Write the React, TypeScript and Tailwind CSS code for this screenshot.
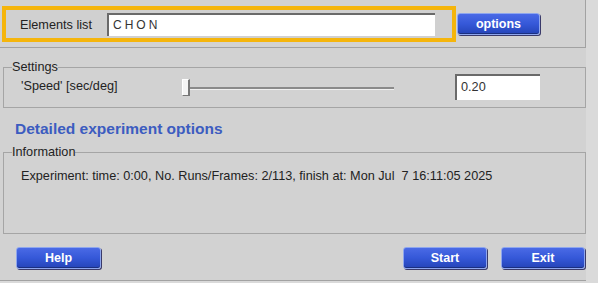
import React from "react";

const font = { fontFamily: '"Liberation Sans", Arial, sans-serif' };

function BlueButton({ label, className }: { label: string; className: string }) {
  return (
    <button
      className={
        "h-[22px] rounded-[3px] border border-[#8ea6ee] bg-gradient-to-b from-[#4a6ae6] via-[#3558d8] to-[#2544b8] text-white text-[12.5px] font-bold font-['Liberation_Sans',Arial,sans-serif] shadow-[inset_0_-1px_0_#1a2f80,1px_1px_0_#3a3a6a] " +
        className
      }
    >
      {label}
    </button>
  );
}

export default function App() {
  return (
    <div
      className="w-[598px] h-[283px] bg-[#dadada] text-[#222] text-[12.7px] flex flex-col overflow-hidden"
      style={font}
    >
      {/* Top panel */}
      <div className="w-[586px] h-[48px] shrink-0 bg-[#d2d2d2] border-b border-r border-[#a2a2a2] flex pt-[6px] pl-[2px]">
        <div className="w-[454px] h-[36px] border-4 border-[#f5b50c] bg-[#d0d0d0] flex items-center">
          <span className="ml-[14px] mt-[3px] w-[87px] text-[12.7px] text-[#222]">Elements list</span>
          <div className="w-[328px] h-[23px] bg-white border-t-2 border-l-2 border-[#6a6a6a] flex items-center pl-[4px] text-[12px] tracking-[3px] text-[#333]">
            CHON
          </div>
        </div>
        <BlueButton label="options" className="ml-[1px] mt-[7px] w-[83px]" />
      </div>

      <div className="w-[586px] h-[233px] shrink-0 bg-[#d2d2d2] flex flex-col pl-[3px] border-b border-[#a2a2a2]">
        {/* Settings */}
        <fieldset className="mt-[12px] h-[48px] border border-[#a5a5a5] pl-[6px] flex items-center">
          <legend className="px-0 text-[12.7px] leading-[14px] text-[#222] ml-[2px]">Settings</legend>
          <div className="flex items-center w-full h-full pb-[6px]">
            <span className="ml-[11px] w-[161px] text-[12.7px]">'Speed' [sec/deg]</span>
            <div className="relative w-[214px] h-[18px] flex items-center">
              <div className="w-[8px] h-[17px] bg-[#f4f4f4] border-r-2 border-b border-[#777] border-l border-t border-l-white border-t-white shrink-0" />
              <div className="w-[204px] h-[3px] bg-[#f0f0f0] border-t-2 border-[#8a8a8a] mt-[2px]" />
            </div>
            <div className="ml-[59px] w-[85px] h-[26px] bg-white border-t-2 border-l-2 border-[#6a6a6a] flex items-center pl-[4px] text-[12.7px] text-[#333]">
              0.20
            </div>
          </div>
        </fieldset>

        <div className="mt-[11px] ml-[12px] h-[19px] text-[15.5px] font-bold text-[#3c5cc0] leading-[19px]">
          Detailed experiment options
        </div>

        {/* Information */}
        <fieldset className="mt-[7px] h-[89px] border border-[#a5a5a5] pl-[6px]">
          <legend className="px-0 text-[12.7px] leading-[14px] text-[#222] ml-[2px]">Information</legend>
          <div className="ml-[11px] mt-[8px] text-[12.7px] text-[#222] whitespace-pre">
            Experiment: time: 0:00, No. Runs/Frames: 2/113, finish at: Mon Jul  7 16:11:05 2025
          </div>
        </fieldset>

        {/* Buttons */}
        <div className="flex items-center mt-[13px]">
          <BlueButton label="Help" className="ml-[13px] w-[85px]" />
          <div className="flex-1" />
          <BlueButton label="Start" className="w-[84px]" />
          <BlueButton label="Exit" className="ml-[14px] mr-[1px] w-[84px]" />
        </div>
      </div>
    </div>
  );
}
